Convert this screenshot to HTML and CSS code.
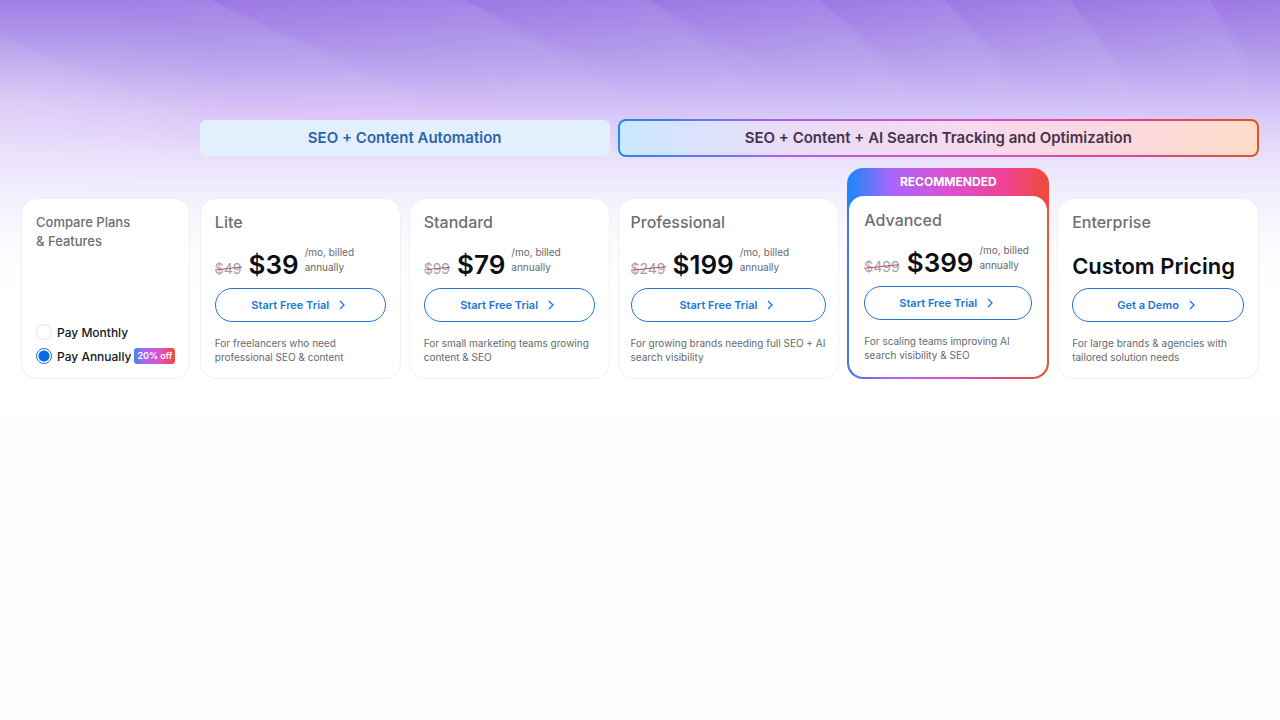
FILE: index.html
```html
<!DOCTYPE html>
<html lang="en">
<head>
<meta charset="utf-8">
<meta name="viewport" content="width=device-width, initial-scale=1">
<title>Compare Plans</title>
<link rel="stylesheet" href="styles.css">
</head>
<body>
<main class="pricing">
  <svg class="backdrop" viewBox="0 0 1280 200" preserveAspectRatio="none" aria-hidden="true">
    <defs>
      <linearGradient id="ray" x1="0" y1="0" x2="1" y2="0">
        <stop offset="0" stop-color="#6f42d6" stop-opacity=".06"/>
        <stop offset="1" stop-color="#ffffff" stop-opacity=".06"/>
      </linearGradient>
      <linearGradient id="fade" x1="0" y1="0" x2="0" y2="1">
        <stop offset="0" stop-color="#fff"/>
        <stop offset=".2" stop-color="#ddd"/>
        <stop offset=".6" stop-color="#000"/>
      </linearGradient>
      <mask id="rays"><rect width="1280" height="200" fill="url(#fade)"/></mask>
    </defs>
    <g mask="url(#rays)">
      <g fill="url(#ray)">
        <rect x="-80" width="290" height="200" transform="skewX(66)"/>
        <rect x="210" width="255" height="200" transform="skewX(64)"/>
        <rect x="465" width="185" height="200" transform="skewX(59)"/>
        <rect x="650" width="170" height="200" transform="skewX(50)"/>
        <rect x="820" width="125" height="200" transform="skewX(44)"/>
        <rect x="945" width="125" height="200" transform="skewX(38)"/>
        <rect x="1070" width="140" height="200" transform="skewX(34)"/>
        <rect x="1210" width="160" height="200" transform="skewX(26)"/>
      </g>
    </g>
  </svg>
  <div class="plans">
    <h2 class="group group-content">SEO + Content Automation</h2>
    <h2 class="group group-ai">SEO + Content + AI Search Tracking and Optimization</h2>

    <form class="card compare">
      <h3 class="compare-title">Compare Plans<br>&amp; Features</h3>
      <div class="billing">
        <label class="option"><input type="radio" name="billing" value="monthly">Pay Monthly</label>
        <label class="option"><input type="radio" name="billing" value="annually" checked>Pay Annually<span class="discount">20% off</span></label>
      </div>
    </form>

    <article class="card">
      <h3 class="name">Lite</h3>
      <div class="price"><s class="was">$49</s><strong class="now">$39</strong><span class="term">/mo, billed<br>annually</span></div>
      <button class="cta" type="button">Start Free Trial<svg class="chevron" viewBox="0 0 6 10" aria-hidden="true"><path d="M1 1l4 4-4 4"/></svg></button>
      <p class="note">For freelancers who need<br>professional SEO &amp; content</p>
    </article>

    <article class="card">
      <h3 class="name">Standard</h3>
      <div class="price"><s class="was">$99</s><strong class="now">$79</strong><span class="term">/mo, billed<br>annually</span></div>
      <button class="cta" type="button">Start Free Trial<svg class="chevron" viewBox="0 0 6 10" aria-hidden="true"><path d="M1 1l4 4-4 4"/></svg></button>
      <p class="note">For small marketing teams growing<br>content &amp; SEO</p>
    </article>

    <article class="card card-wide">
      <h3 class="name">Professional</h3>
      <div class="price"><s class="was">$249</s><strong class="now">$199</strong><span class="term">/mo, billed<br>annually</span></div>
      <button class="cta" type="button">Start Free Trial<svg class="chevron" viewBox="0 0 6 10" aria-hidden="true"><path d="M1 1l4 4-4 4"/></svg></button>
      <p class="note">For growing brands needing full SEO + AI<br>search visibility</p>
    </article>

    <div class="featured">
      <p class="ribbon">RECOMMENDED</p>
      <article class="card card-featured">
        <h3 class="name">Advanced</h3>
        <div class="price"><s class="was">$499</s><strong class="now">$399</strong><span class="term">/mo, billed<br>annually</span></div>
        <button class="cta" type="button">Start Free Trial<svg class="chevron" viewBox="0 0 6 10" aria-hidden="true"><path d="M1 1l4 4-4 4"/></svg></button>
        <p class="note">For scaling teams improving AI<br>search visibility &amp; SEO</p>
      </article>
    </div>

    <article class="card">
      <h3 class="name">Enterprise</h3>
      <div class="price"><strong class="now now-custom">Custom Pricing</strong></div>
      <button class="cta" type="button">Get a Demo<svg class="chevron" viewBox="0 0 6 10" aria-hidden="true"><path d="M1 1l4 4-4 4"/></svg></button>
      <p class="note">For large brands &amp; agencies with<br>tailored solution needs</p>
    </article>
  </div>
</main>
</body>
</html>
```

FILE: styles.css
```css
* { box-sizing: border-box; }

body {
  margin: 0;
  background: #fcfcfc;
  color: #14171c;
  font-family: Inter, "Liberation Sans", sans-serif;
}

h2, h3, p { margin: 0; }

.pricing {
  position: relative;
  padding: 119px 21px 37px;
  background:
    radial-gradient(ellipse 240px 110px at 0 100px, rgba(255, 255, 255, .22), transparent),
    radial-gradient(ellipse 460px 44px at 330px 114px, rgba(236, 190, 240, .3), transparent),
    linear-gradient(#9f7be5 0, #ac8fe9 32px, #bba5ee 64px, #ccbaf5 95px, #d9cbf9 119px, #e8e0fb 156px, #f3effd 195px, #fbfaff 240px, #fff 290px);
}

.backdrop {
  position: absolute;
  top: 0;
  left: 0;
  width: 100%;
  height: 200px;
}

.plans {
  position: relative;
  display: grid;
  grid-template-columns: minmax(0, 171fr) minmax(0, 201fr) minmax(0, 201fr) minmax(0, 222fr) minmax(0, 202fr) minmax(0, 202fr);
  column-gap: 8px;
  row-gap: 11px;
}

.group {
  display: flex;
  align-items: center;
  justify-content: center;
  height: 38px;
  font-size: 15px;
  font-weight: 600;
  line-height: 20px;
}

.group-content {
  grid-column: 2 / 4;
  height: 36px;
  margin-top: 1px;
  border-radius: 6px;
  background: #e2f0fe;
  color: #2c63ad;
}

.group-ai {
  grid-column: 4 / 7;
  border: 2px solid transparent;
  border-radius: 8px;
  background:
    linear-gradient(90deg, #cbe8ff, #eadcfa 25%, #f7daee 55%, #fdd8de 80%, #fddcc8) padding-box,
    linear-gradient(90deg, #1b8bec, #a964e4 25%, #dc4fc0 60%, #e0457f 82%, #e2571f) border-box;
  color: #43344a;
}

.card {
  margin-top: 30px;
  padding: 12px 14px 14px;
  border: 1px solid #f0eff4;
  border-radius: 16px;
  background: #fff;
}

.card-wide { padding-inline: 12px; }

.compare {
  display: flex;
  flex-direction: column;
  justify-content: space-between;
  margin-right: 2px;
  padding-top: 14px;
}

.compare-title {
  color: #6b6e73;
  font-size: 13px;
  font-weight: 500;
  line-height: 19px;
}

.billing {
  display: grid;
  gap: 8px;
}

.option {
  display: flex;
  align-items: center;
  height: 16px;
  font-size: 12px;
  font-weight: 500;
  white-space: nowrap;
}

.option input {
  appearance: none;
  flex: none;
  width: 16px;
  height: 16px;
  margin: 0 5px 0 0;
  border: 1px solid #e4e5e8;
  border-radius: 50%;
  background: #fff;
}

.option input:checked {
  border-color: #1c72d4;
  background: radial-gradient(circle, #0a6be0 5px, #fff 6px);
}

.discount {
  margin-left: 3px;
  padding: 0 3px;
  border-radius: 3px;
  background: linear-gradient(90deg, #4a83f0, #b263f0 30%, #e552c0 65%, #ec4d3a);
  color: #fff;
  font-size: 9px;
  font-weight: 600;
  line-height: 16px;
}

.name {
  color: #6d7074;
  font-size: 16px;
  font-weight: 500;
  line-height: 22px;
}

.price {
  display: flex;
  align-items: baseline;
  height: 41px;
  margin-top: 12px;
  white-space: nowrap;
}

.was {
  position: relative;
  margin-right: 7px;
  color: #a3a4a8;
  font-size: 14px;
  line-height: 20px;
  text-decoration: none;
}

.was::after {
  content: "";
  position: absolute;
  top: 9px;
  left: 0;
  width: 100%;
  height: 1px;
  background: #c84468;
  transform: rotate(-6deg);
}

.now {
  color: #0b0e14;
  font-size: 26px;
  font-weight: 600;
  line-height: 39px;
}

.now-custom {
  font-size: 22px;
  line-height: 42px;
}

.term {
  margin-left: 6px;
  align-self: flex-start;
  color: #66696e;
  font-size: 10px;
  line-height: 15px;
}

.cta {
  display: flex;
  align-items: center;
  justify-content: center;
  gap: 10px;
  width: 100%;
  height: 34px;
  margin-top: 2px;
  padding: 0 4px 0 0;
  border: 1px solid #2376d2;
  border-radius: 17px;
  background: #fff;
  color: #1b75d8;
  font: 600 11px/16px Inter, "Liberation Sans", sans-serif;
}

.chevron {
  width: 6px;
  height: 10px;
  fill: none;
  stroke: currentColor;
  stroke-width: 1.3;
}

.note {
  margin-top: 14px;
  color: #66696e;
  font-size: 10px;
  line-height: 14px;
  white-space: nowrap;
}

.featured {
  padding: 0 2px 2px;
  border-radius: 16px;
  background:
    linear-gradient(90deg, #1689fb, #a866fb 22%, #d951d0 50%, #ee4396 78%, #f04a38) top / 100% 40px no-repeat,
    linear-gradient(90deg, #3d7ae8, #a866fb 22%, #d951d0 50%, #e8457c 78%, #e05a30);
}

.ribbon {
  height: 28px;
  color: #fff;
  font-size: 12px;
  font-weight: 700;
  line-height: 28px;
  text-align: center;
}

.card-featured {
  margin-top: 0;
  border-color: #fff;
  border-radius: 14px;
}
```
